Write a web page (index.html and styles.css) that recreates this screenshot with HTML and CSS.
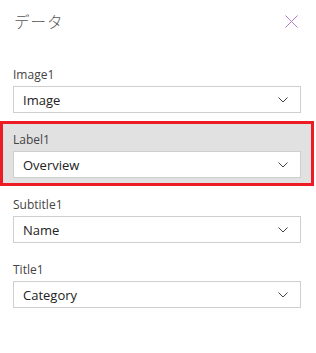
FILE: index.html
```html
<!DOCTYPE html>
<html lang="ja">
<head>
    <meta charset="UTF-8">
    <meta name="viewport" content="width=device-width, initial-scale=1.0">
    <title>データ</title>
    <link rel="stylesheet" href="styles.css">
</head>
<body>
    <div class="panel">
        <div class="panel-header">
            <h1 class="panel-title">データ</h1>
            <button type="button" class="close-btn" aria-label="閉じる">
                <svg width="13" height="13" viewBox="0 0 13 13">
                    <path d="M0.5 0.5 L12.5 12.5 M12.5 0.5 L0.5 12.5" stroke="#b07cc4" stroke-width="1" fill="none"/>
                </svg>
            </button>
        </div>

        <div class="field">
            <label class="field-label">Image1</label>
            <div class="dropdown">
                <span>Image</span>
                <svg class="chevron" width="10" height="6" viewBox="0 0 10 6"><path d="M0.5 0.5 L5 5 L9.5 0.5" stroke="#444" fill="none"/></svg>
            </div>
        </div>

        <div class="field selected">
            <label class="field-label">Label1</label>
            <div class="dropdown">
                <span>Overview</span>
                <svg class="chevron" width="10" height="6" viewBox="0 0 10 6"><path d="M0.5 0.5 L5 5 L9.5 0.5" stroke="#444" fill="none"/></svg>
            </div>
        </div>

        <div class="field">
            <label class="field-label">Subtitle1</label>
            <div class="dropdown">
                <span>Name</span>
                <svg class="chevron" width="10" height="6" viewBox="0 0 10 6"><path d="M0.5 0.5 L5 5 L9.5 0.5" stroke="#444" fill="none"/></svg>
            </div>
        </div>

        <div class="field">
            <label class="field-label">Title1</label>
            <div class="dropdown">
                <span>Category</span>
                <svg class="chevron" width="10" height="6" viewBox="0 0 10 6"><path d="M0.5 0.5 L5 5 L9.5 0.5" stroke="#444" fill="none"/></svg>
            </div>
        </div>
    </div>
</body>
</html>
```

FILE: styles.css
```css
body {
    margin: 0;
    background: #fff;
    font-family: "Open Sans", "Noto Sans", sans-serif;
}
.panel {
    width: 314px;
}
.panel-header {
    height: 56px;
    display: flex;
    align-items: flex-start;
    justify-content: space-between;
    padding: 0 16px 0 14px;
    box-sizing: border-box;
}
.panel-title {
    margin: 10px 0 0;
    font-family: "Noto Sans CJK JP", sans-serif;
    font-weight: 300;
    font-size: 15.5px;
    line-height: 22px;
    color: #555;
    letter-spacing: 1px;
}
.close-btn {
    margin-top: 15px;
    padding: 0;
    border: none;
    background: none;
    width: 13px;
    height: 13px;
    display: block;
}
.close-btn svg {
    display: block;
}
.field {
    height: 65px;
    padding: 8px 13px;
    box-sizing: border-box;
}
.field.selected {
    background: #e1e1e1;
    box-shadow: inset 0 0 0 3px #ed1c24;
}
.field-label {
    display: block;
    height: 22px;
    line-height: 22px;
    font-size: 12px;
    color: #444;
}
.dropdown {
    height: 27px;
    border: 1px solid #cfcfcf;
    background: #fff;
    box-sizing: border-box;
    display: flex;
    align-items: center;
    justify-content: space-between;
    padding: 0 12px 0 9px;
    font-size: 13px;
    color: #222;
}
.chevron {
    display: block;
}
```
